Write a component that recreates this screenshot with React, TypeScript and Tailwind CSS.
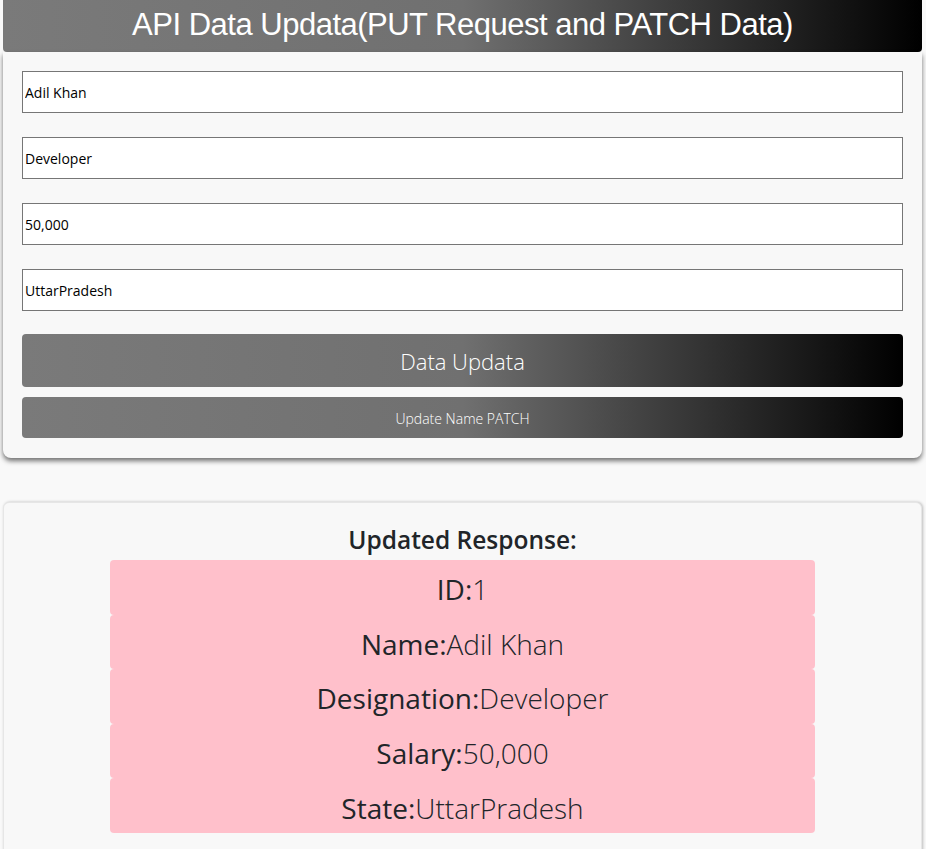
import React, { useState } from 'react';

const btnGradient = 'bg-[linear-gradient(90deg,#7a7a7a_0%,#707070_50%,#000000_100%)]';

export default function App() {
  const [form, setForm] = useState({
    name: 'Adil Khan',
    designation: 'Developer',
    salary: '50,000',
    state: 'UttarPradesh',
  });

  const rows = [
    { label: 'ID:', value: '1' },
    { label: 'Name:', value: form.name },
    { label: 'Designation:', value: form.designation },
    { label: 'Salary:', value: form.salary },
    { label: 'State:', value: form.state },
  ];

  return (
    <div className="min-h-[849px] bg-[#f9f9f9] pl-[3px] pr-[4px] font-['Open_Sans',sans-serif]">
      {/* Header */}
      <div className={`h-[52px] flex items-center justify-center pb-[3px] rounded-b-[4px] ${btnGradient}`}>
        <h1 className="text-white text-[31px] font-['Liberation_Sans',Arial,sans-serif] tracking-[-0.5px] leading-none">
          API Data Updata(PUT Request and PATCH Data)
        </h1>
      </div>

      {/* Form card */}
      <div className="bg-[#f8f8f8] rounded-b-[8px] shadow-[0_3px_5px_rgba(0,0,0,0.55)] px-[19px] pt-[19px] pb-[20px]">
        <div className="flex flex-col gap-[24px]">
          {(['name', 'designation', 'salary', 'state'] as const).map((key) => (
            <input
              key={key}
              value={form[key]}
              onChange={(e) => setForm({ ...form, [key]: e.target.value })}
              className="h-[42px] w-full bg-white border border-[#767676] px-[2px] text-[14px] text-black outline-none"
            />
          ))}
        </div>
        <button className={`mt-[23px] w-full h-[53px] rounded-[4px] text-white text-[22px] font-light pt-[2px] ${btnGradient}`}>
          Data Updata
        </button>
        <button className={`mt-[10px] w-full h-[41px] rounded-[4px] text-white text-[14px] font-light pt-[2px] ${btnGradient}`}>
          Update Name PATCH
        </button>
      </div>

      {/* Response card */}
      <div className="mt-[44px] bg-[#f8f8f8] rounded-t-[6px] border border-[#e6e6e6] shadow-[1px_0_3px_rgba(0,0,0,0.25)] pt-[17px] pb-[20px] flex flex-col items-center">
        <h2 className="text-[24.5px] font-semibold text-[#212529] leading-[40px]">Updated Response:</h2>
        <div className="w-[705px] flex flex-col">
          {rows.map((r) => (
            <div
              key={r.label}
              className="h-[54.6px] bg-[#ffc0cb] rounded-[4px] flex items-center justify-center pt-[4px] text-[28px] text-[#212529]"
            >
              <span className="font-normal">{r.label}</span>
              <span className="font-light">{r.value}</span>
            </div>
          ))}
        </div>
      </div>
    </div>
  );
}
